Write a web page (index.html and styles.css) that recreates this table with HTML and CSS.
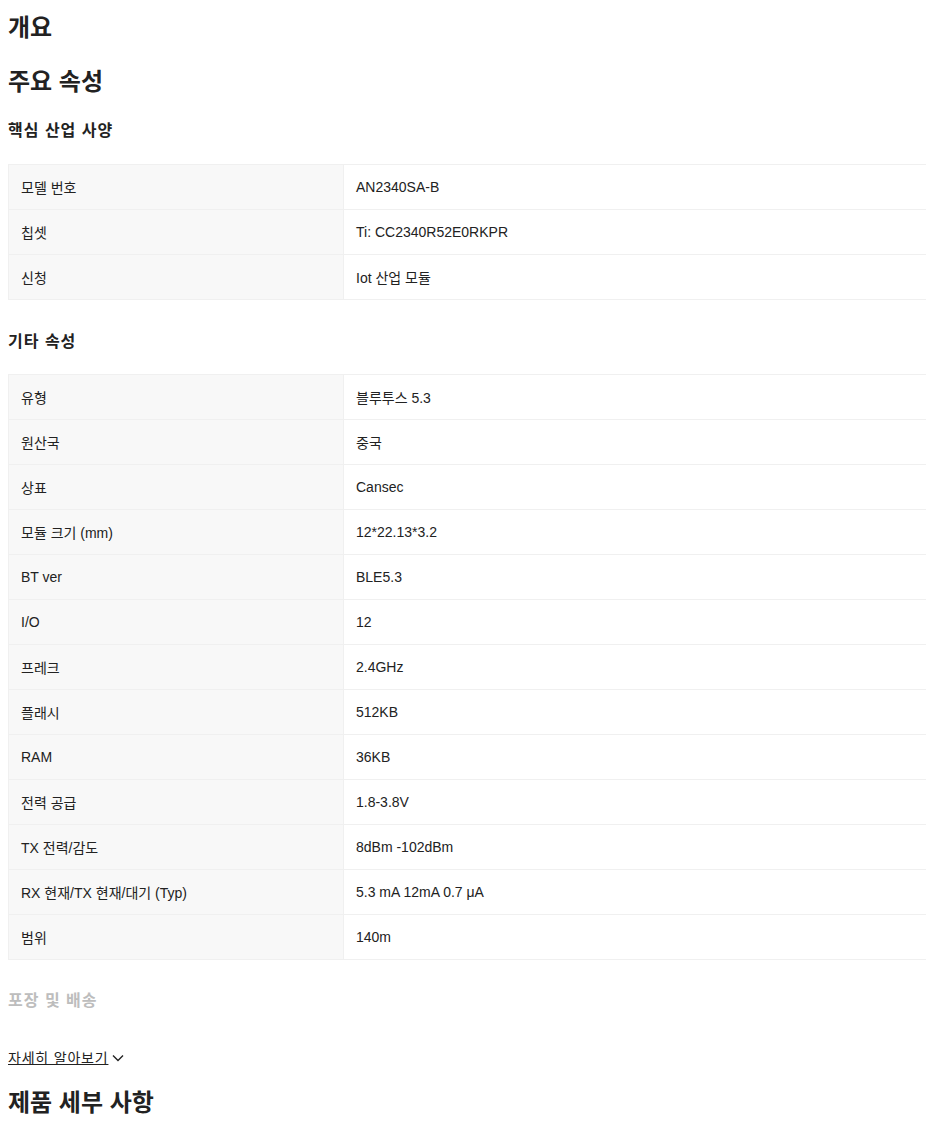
FILE: index.html
```html
<!DOCTYPE html>
<html lang="ko">

<head>
    <meta charset="UTF-8">
    <title>제품 속성</title>
    <link rel="stylesheet" href="styles.css">
</head>

<body>
    <div class="page">
        <h2 class="title first">개요</h2>
        <h2 class="title">주요 속성</h2>
        <h3 class="sub">핵심 산업 사양</h3>
        <table class="attr">
            <tr><td class="key">모델 번호</td><td>AN2340SA-B</td></tr>
            <tr><td class="key">칩셋</td><td>Ti: CC2340R52E0RKPR</td></tr>
            <tr><td class="key">신청</td><td>Iot 산업 모듈</td></tr>
        </table>
        <h3 class="sub other">기타 속성</h3>
        <table class="attr">
            <tr><td class="key">유형</td><td>블루투스 5.3</td></tr>
            <tr><td class="key">원산국</td><td>중국</td></tr>
            <tr><td class="key">상표</td><td>Cansec</td></tr>
            <tr><td class="key">모듈 크기 (mm)</td><td>12*22.13*3.2</td></tr>
            <tr><td class="key">BT ver</td><td>BLE5.3</td></tr>
            <tr><td class="key">I/O</td><td>12</td></tr>
            <tr><td class="key">프레크</td><td>2.4GHz</td></tr>
            <tr><td class="key">플래시</td><td>512KB</td></tr>
            <tr><td class="key">RAM</td><td>36KB</td></tr>
            <tr><td class="key">전력 공급</td><td>1.8-3.8V</td></tr>
            <tr><td class="key">TX 전력/감도</td><td>8dBm -102dBm</td></tr>
            <tr><td class="key">RX 현재/TX 현재/대기 (Typ)</td><td>5.3 mA 12mA 0.7 μA</td></tr>
            <tr><td class="key">범위</td><td>140m</td></tr>
        </table>
        <h3 class="sub muted">포장 및 배송</h3>
        <a class="more" href="#">자세히 알아보기</a><svg class="chev" width="14" height="14" viewBox="0 0 14 14"><path d="M2 4.5 L7 9.5 L12 4.5" fill="none" stroke="#222" stroke-width="1.4"/></svg>
        <h2 class="title detail">제품 세부 사항</h2>
    </div>
</body>

</html>
```

FILE: styles.css
```css
* {
    padding: 0;
    margin: 0;
}
html, body {
    overflow-x: hidden;
}
body {
    background: #fff;
    font-family: "Liberation Sans", "Noto Sans CJK KR", sans-serif;
    color: #222;
}
.page {
    padding: 0 8px 40px 8px;
}
.title {
    font-size: 24px;
    line-height: 32px;
    font-weight: bold;
    color: #222;
    margin-top: 22px;
}
.title.first {
    margin-top: 12px;
}
.title.detail {
    margin-top: 19px;
}
.sub {
    font-size: 16px;
    line-height: 24px;
    font-weight: bold;
    color: #222;
    margin: 21px 0 21px 0;
    letter-spacing: 1px;
}
.sub.other {
    margin-top: 30px;
    margin-bottom: 20px;
}
.sub.muted {
    color: #bdbdbd;
    margin-top: 29px;
    margin-bottom: 35px;
}
.attr {
    width: 940px;
    border-collapse: collapse;
    font-size: 14px;
    color: #222;
}
.attr td {
    height: 44px;
    padding: 0 12px;
    border: 1px solid #f0f0f0;
    vertical-align: middle;
}
.attr td.key {
    width: 310px;
    background: #f8f8f8;
}
.more {
    font-size: 14px;
    line-height: 20px;
    color: #222;
    text-decoration: underline;
    letter-spacing: 0.8px;
}
.chev {
    vertical-align: -2px;
    margin-left: 3px;
}
```
